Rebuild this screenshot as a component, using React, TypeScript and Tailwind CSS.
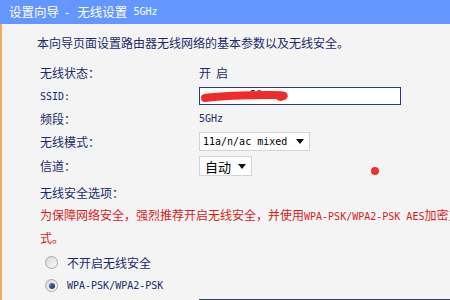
import React from 'react';

const mono = "font-['DejaVu_Sans_Mono',monospace] text-[10px]";

const Row = ({ label, h = 'h-[23px]', children }: { label: React.ReactNode; h?: string; children?: React.ReactNode }) => (
  <div className={`flex items-center shrink-0 ${h}`}>
    <div className="w-[159px] shrink-0">{label}</div>
    <div className="flex items-center">{children}</div>
  </div>
);

const Select = ({ children, w }: { children: React.ReactNode; w: string }) => (
  <div className={`flex items-center justify-between bg-white border border-[#d4d4d4] text-black ${w}`}>
    {children}
    <svg width="8" height="5" viewBox="0 0 8 5" className="mr-[5px]">
      <path d="M0 0H8L4 5Z" fill="#111" />
    </svg>
  </div>
);

const Radio = ({ checked }: { checked?: boolean }) => (
  <div className="w-[13px] h-[13px] rounded-full border border-[#a8a8a8] bg-gradient-to-br from-[#d8d8d8] to-[#fbfbfb] flex items-center justify-center">
    {checked && <div className="w-[6px] h-[6px] rounded-full bg-gradient-to-br from-[#5a7fb8] to-[#1c2f5a]" />}
  </div>
);

export default function App() {
  return (
    <div className="relative w-[450px] h-[300px] overflow-hidden bg-[#f4f4f4] text-[12px] text-[#1b2b6b] font-['Noto_Sans_CJK_SC',sans-serif] leading-none">
      {/* Header */}
      <div className="h-[24px] bg-[#6496ff] flex items-center pl-[9px] text-white text-[12.5px]">
        <span>设置向导</span>
        <span className="ml-[6px]">-</span>
        <span className="ml-[8px]">无线设置</span>
        <span className={`ml-[6px] ${mono}`}>5GHz</span>
      </div>

      <div className="border-l-2 border-[#f0ac66] h-[276px] pl-[38px] flex flex-col">
        <div className="-ml-[3px] mt-[8px] h-[22px] flex items-center shrink-0">
          本向导页面设置路由器无线网络的基本参数以及无线安全。
        </div>

        <div className="mt-[7px]" />
        <Row label="无线状态：">
          <span>开</span>
          <span className="ml-[5px]">启</span>
        </Row>
        <Row label={<span className={mono}>SSID:</span>}>
          <div className="relative w-[202px] h-[18px] bg-white border border-[#283c80] overflow-hidden">
            <span className={`absolute left-[50px] top-[2px] ${mono} text-[#333]`}>5G</span>
            <svg width="200" height="16" viewBox="0 0 200 16" className="absolute left-0 top-0">
              <path d="M5 10 C20 8 45 7 70 7 S 78 9 80 9" stroke="#f02a2a" strokeWidth="8" strokeLinecap="round" fill="none" />
            </svg>
          </div>
        </Row>
        <Row label="频段：">
          <span className={mono}>5GHz</span>
        </Row>
        <Row label="无线模式：">
          <Select w="w-[111px] h-[19px]">
            <span className={`pl-[3px] ${mono}`}>11a/n/ac mixed</span>
          </Select>
        </Row>
        <Row label="信道：" h="h-[26px]">
          <Select w="w-[53px] h-[20px]">
            <span className="pl-[5px] text-[13px]">自动</span>
          </Select>
        </Row>
        <div className="mt-[2px]" />
        <Row label="无线安全选项：" />

        <div className="w-[424px] shrink-0 leading-[21px] text-[#d81c1c]">
          为保障网络安全，强烈推荐开启无线安全，并使用<span className={mono}>WPA-PSK/WPA2-PSK AES</span>加密方式。
        </div>

        <div className="mt-[3px] h-[23px] flex items-center shrink-0 pl-[5px] gap-[9px]">
          <Radio />
          <span>不开启无线安全</span>
        </div>
        <div className="h-[23px] flex items-center shrink-0 pl-[5px] gap-[9px]">
          <Radio checked />
          <span className={mono}>WPA-PSK/WPA2-PSK</span>
        </div>

        <div className="mt-[2px] pl-[159px] shrink-0">
          <div className="w-[260px] h-[20px] bg-white border border-[#283c80]" />
        </div>
      </div>

      {/* red mark */}
      <div className="absolute left-[371px] top-[167px] w-[8px] h-[8px] rounded-full bg-[#f03030]" />
    </div>
  );
}
